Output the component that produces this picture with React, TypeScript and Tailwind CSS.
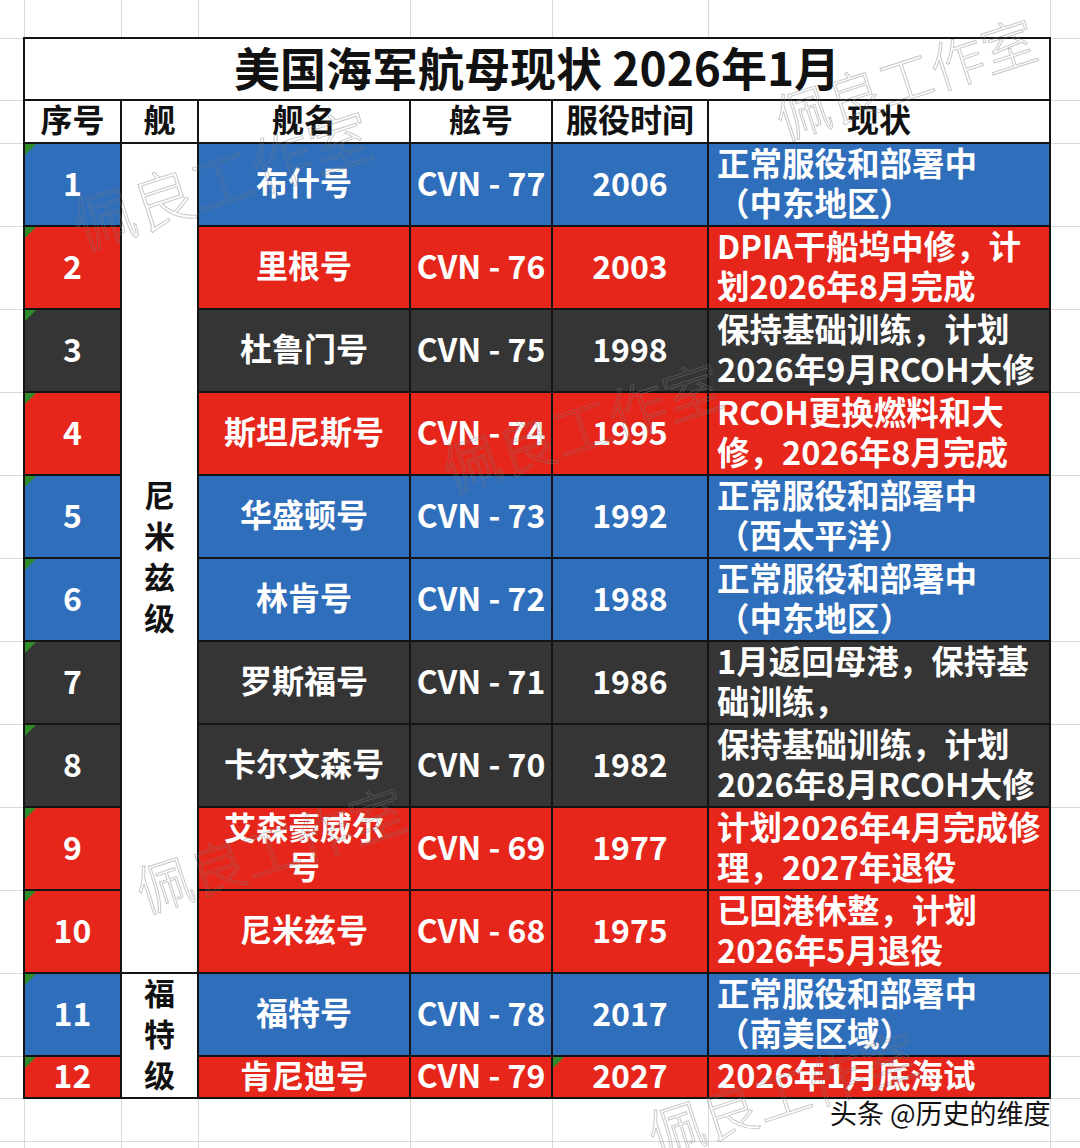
import React from "react";

type Tone = "blue" | "red" | "dark";

const toneBg: Record<Tone, string> = {
  blue: "bg-[#2f6ebb]",
  red: "bg-[#e6261b]",
  dark: "bg-[#353535]",
};

const rows: { no: string; name: string[]; hull: string; year: string; status: string[]; tone: Tone; yearMark?: boolean }[] = [
  { no: "1", name: ["布什号"], hull: "CVN-77", year: "2006", status: ["正常服役和部署中", "（中东地区）"], tone: "blue" },
  { no: "2", name: ["里根号"], hull: "CVN-76", year: "2003", status: ["DPIA干船坞中修，计", "划2026年8月完成"], tone: "red" },
  { no: "3", name: ["杜鲁门号"], hull: "CVN-75", year: "1998", status: ["保持基础训练，计划", "2026年9月RCOH大修"], tone: "dark" },
  { no: "4", name: ["斯坦尼斯号"], hull: "CVN-74", year: "1995", status: ["RCOH更换燃料和大", "修，2026年8月完成"], tone: "red" },
  { no: "5", name: ["华盛顿号"], hull: "CVN-73", year: "1992", status: ["正常服役和部署中", "（西太平洋）"], tone: "blue" },
  { no: "6", name: ["林肯号"], hull: "CVN-72", year: "1988", status: ["正常服役和部署中", "（中东地区）"], tone: "blue" },
  { no: "7", name: ["罗斯福号"], hull: "CVN-71", year: "1986", status: ["1月返回母港，保持基", "础训练，"], tone: "dark" },
  { no: "8", name: ["卡尔文森号"], hull: "CVN-70", year: "1982", status: ["保持基础训练，计划", "2026年8月RCOH大修"], tone: "dark" },
  { no: "9", name: ["艾森豪威尔", "号"], hull: "CVN-69", year: "1977", status: ["计划2026年4月完成修", "理，2027年退役"], tone: "red" },
  { no: "10", name: ["尼米兹号"], hull: "CVN-68", year: "1975", status: ["已回港休整，计划", "2026年5月退役"], tone: "red" },
  { no: "11", name: ["福特号"], hull: "CVN-78", year: "2017", status: ["正常服役和部署中", "（南美区域）"], tone: "blue" },
  { no: "12", name: ["肯尼迪号"], hull: "CVN-79", year: "2027", status: ["2026年1月底海试"], tone: "red", yearMark: true },
];

const grid = "border border-[#d9d9d9] p-0";
const cell = "border-2 border-[#141414] p-0";
// nudges the glyphs up without changing the row height
const lift = "-translate-y-[3px]";

function Mark() {
  return (
    <span className="absolute top-0 left-0 w-0 h-0 border-t-[11px] border-r-[11px] border-t-[#2f8a2a] border-r-transparent" />
  );
}

function Watermark({ className }: { className: string }) {
  return (
    <div
      className={`absolute pointer-events-none whitespace-nowrap rotate-[-18deg] font-light leading-none text-transparent [-webkit-text-stroke:1px_rgba(125,125,125,0.42)] ${className}`}
    >
      佩良工作室
    </div>
  );
}

function Blank({ h }: { h: string }) {
  return (
    <tr className={h}>
      <td className={`${grid} border-l-0`} />
      <td className={grid} />
      <td className={grid} />
      <td className={grid} />
      <td className={grid} />
      <td className={grid} />
      <td className={grid} />
      <td className={`${grid} border-r-0`} />
    </tr>
  );
}

function Vertical({ chars }: { chars: string[] }) {
  return (
    <div className="flex flex-col items-center -translate-y-[3px] text-[31px] leading-[41px] font-bold text-[#111]">
      {chars.map((c) => (
        <span key={c}>{c}</span>
      ))}
    </div>
  );
}

export default function App() {
  return (
    <div className="relative w-[1080px] h-[1148px] overflow-hidden bg-white font-['Noto_Sans_CJK_SC','Noto_Sans',sans-serif]">
      <table className="table-fixed w-[1080px] border-collapse">
        <colgroup>
          <col className="w-[24px]" />
          <col className="w-[97px]" />
          <col className="w-[77px]" />
          <col className="w-[212px]" />
          <col className="w-[142px]" />
          <col className="w-[156px]" />
          <col className="w-[342px]" />
          <col className="w-[30px]" />
        </colgroup>
        <tbody>
          <tr className="h-[38px]">
            <td className={`${grid} border-l-0 border-t-0`} />
            <td className={`${grid} border-t-0`} />
            <td className={`${grid} border-t-0`} />
            <td className={`${grid} border-t-0`} />
            <td className={`${grid} border-t-0`} />
            <td className={`${grid} border-t-0`} />
            <td className={`${grid} border-t-0`} />
            <td className={`${grid} border-r-0 border-t-0`} />
          </tr>
          <tr className="h-[62px]">
            <td className={`${grid} border-l-0`} />
            <td colSpan={6} className={`${cell} pb-[6px] text-center text-[46px] leading-none font-bold text-[#111]`}>
              美国海军航母现状 2026年1月
            </td>
            <td className={`${grid} border-r-0`} />
          </tr>
          <tr className="h-[43px] text-[32px] leading-none font-bold text-[#111] text-center">
            <td className={`${grid} border-l-0`} />
            <td className={`${cell} pb-[7px]`}>序号</td>
            <td className={`${cell} pb-[7px]`}>舰</td>
            <td className={`${cell} pb-[7px]`}>舰名</td>
            <td className={`${cell} pb-[7px]`}>舷号</td>
            <td className={`${cell} pb-[7px]`}>服役时间</td>
            <td className={`${cell} pb-[7px]`}>现状</td>
            <td className={`${grid} border-r-0`} />
          </tr>
          {rows.map((r, i) => (
            <tr
              key={r.no}
              className={`${i === 11 ? "h-[42px]" : "h-[83px]"} text-[32px] leading-none font-bold text-white text-center`}
            >
              <td className={`${grid} border-l-0`} />
              <td className={`${cell} ${toneBg[r.tone]} relative`}>
                <Mark />
                <div className={lift}>{r.no}</div>
              </td>
              {i === 0 && (
                <td rowSpan={10} className={`${cell} bg-white`}>
                  <Vertical chars={["尼", "米", "兹", "级"]} />
                </td>
              )}
              {i === 10 && (
                <td rowSpan={2} className={`${cell} bg-white`}>
                  <Vertical chars={["福", "特", "级"]} />
                </td>
              )}
              <td className={`${cell} ${toneBg[r.tone]} leading-[39px]`}>
                <div className={lift}>
                  {r.name.map((n) => (
                    <div key={n}>{n}</div>
                  ))}
                </div>
              </td>
              <td className={`${cell} ${toneBg[r.tone]}`}>
                <div className={lift}>{r.hull.replace("-", " - ")}</div>
              </td>
              <td className={`${cell} ${toneBg[r.tone]} relative`}>
                {r.yearMark && <Mark />}
                <div className={lift}>{r.year}</div>
              </td>
              <td
                className={`${cell} ${toneBg[r.tone]} text-left pl-[8px] text-[32.5px] ${i === 11 ? "leading-none" : "leading-[40px]"} whitespace-nowrap`}
              >
                <div className={lift}>
                  {r.status.map((s) => (
                    <div key={s}>{s}</div>
                  ))}
                </div>
              </td>
              <td className={`${grid} border-r-0`} />
            </tr>
          ))}
          <Blank h="h-[43px]" />
          <Blank h="h-[20px]" />
        </tbody>
      </table>

      <Watermark className="left-[66px] top-[146px] text-[62px]" />
      <Watermark className="left-[770px] top-[50px] text-[54px]" />
      <Watermark className="left-[436px] top-[396px] text-[58px]" />
      <Watermark className="left-[130px] top-[820px] text-[56px]" />
      <Watermark className="left-[642px] top-[1064px] text-[56px]" />

      <div className="absolute left-[830px] top-[1096px] text-[27px] leading-[34px] text-[#111] whitespace-nowrap [text-shadow:0_0_2px_#fff,0_0_2px_#fff]">
        头条 @历史的维度
      </div>
    </div>
  );
}
